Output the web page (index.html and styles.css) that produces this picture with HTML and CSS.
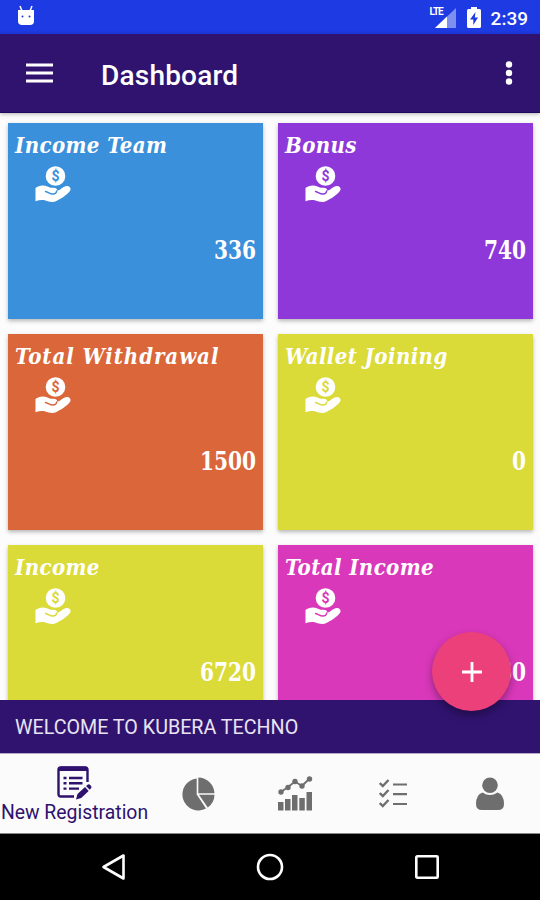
FILE: index.html
```
<!DOCTYPE html>
<html lang="en">
<head>
	<meta charset="UTF-8">
	<title>Dashboard</title>
	<link rel="stylesheet" href="styles.css">
</head>
<body>
	<!-- shared card icon -->
	<svg class="defs" width="0" height="0">
		<symbol id="hand" viewBox="0 0 36 37">
			<circle cx="20.5" cy="10" r="9.8" fill="#fff"/>
			<path fill="#fff" d="M.5 22c3-2.700 8-3.500 12-1.500 2 1 3 1.500 6 1.300 2.500 0 4 1.200 3.700 3 4-1 6-4.700 9.500-4.800 3.500-.2 4.800 3 3.200 5-3 4-9 7.700-13.500 10-4 2-8 .2-11-.5-3.500-.8-6.500-.3-9.900.8z"/>
			<path class="cut" fill="none" stroke-width="1.400" stroke-linecap="round" d="M10.500 25.500c3 .5 4.500 2.800 7.500 2.500 2 0 3.500-1 3.700-3"/>
		</symbol>
	</svg>
	<div class="phone">
		<div class="status">
			<svg class="droid" width="18" height="22" viewBox="0 0 18 22">
				<path d="M3 1l2 5M15 1l-2 5" stroke="#fff" stroke-width="1.500"/>
				<path d="M1 5h16v11q0 4-4 4H5q-4 0-4-4z" fill="#fff"/>
				<circle cx="5.500" cy="11.500" r="1" fill="#1d3ae3"/>
				<circle cx="12.500" cy="11.500" r="1" fill="#1d3ae3"/>
			</svg>
			<div class="signal">
				<span class="lte">LTE</span>
				<svg width="21" height="20" viewBox="0 0 21 20">
					<path d="M21 0v20H0z" fill="#7f8ff0"/>
					<path d="M12 8.500V20H0z" fill="#fff"/>
				</svg>
			</div>
			<svg class="battery" width="14" height="21" viewBox="0 0 14 21">
				<path d="M4 0h6v2h2.500q1.500 0 1.500 1.500v16q0 1.500-1.500 1.500h-11Q0 21 0 19.500v-16Q0 2 1.500 2H4z" fill="#fff"/>
				<path d="M8.500 5L3 12.500h3.300V18L11 10.500H7.800z" fill="#1d3ae3"/>
			</svg>
			<span class="time">2:39</span>
		</div>
		<div class="appbar">
			<svg width="27" height="20" viewBox="0 0 27 20">
				<path d="M0 2h27M0 10h27M0 18h27" stroke="#fff" stroke-width="3"/>
			</svg>
			<h1>Dashboard</h1>
			<svg class="more" width="8" height="24" viewBox="0 0 8 24" fill="#fff">
				<circle cx="4" cy="3.500" r="3.200"/>
				<circle cx="4" cy="12" r="3.200"/>
				<circle cx="4" cy="20.500" r="3.200"/>
			</svg>
		</div>
		<div class="content">
			<div class="card blue">
				<h2>Income Team</h2>
				<svg class="hand"><use href="#hand"/><text class="coin" x="20.5" y="15" text-anchor="middle">$</text></svg>
				<p>336</p>
			</div>
			<div class="card purple">
				<h2>Bonus</h2>
				<svg class="hand"><use href="#hand"/><text class="coin" x="20.5" y="15" text-anchor="middle">$</text></svg>
				<p>740</p>
			</div>
			<div class="card orange">
				<h2 class="wide">Total Withdrawal</h2>
				<svg class="hand"><use href="#hand"/><text class="coin" x="20.5" y="15" text-anchor="middle">$</text></svg>
				<p>1500</p>
			</div>
			<div class="card yellow">
				<h2>Wallet Joining</h2>
				<svg class="hand"><use href="#hand"/><text class="coin" x="20.5" y="15" text-anchor="middle">$</text></svg>
				<p>0</p>
			</div>
			<div class="card yellow">
				<h2>Income</h2>
				<svg class="hand"><use href="#hand"/><text class="coin" x="20.5" y="15" text-anchor="middle">$</text></svg>
				<p>6720</p>
			</div>
			<div class="card pink">
				<h2>Total Income</h2>
				<svg class="hand"><use href="#hand"/><text class="coin" x="20.5" y="15" text-anchor="middle">$</text></svg>
				<p>60</p>
			</div>
		</div>
		<div class="welcome">WELCOME TO KUBERA TECHNO</div>
		<div class="fab">
			<svg width="22" height="22" viewBox="0 0 22 22">
				<path d="M11 1v20M1 11h20" stroke="#fff" stroke-width="2.800"/>
			</svg>
		</div>
		<div class="tabs">
			<div class="tab active">
				<svg width="35" height="34" viewBox="0 0 35 34">
					<path d="M17 30.500H4Q1.500 30.500 1.500 28V3.500Q1.500 1.500 4 1.500H28Q30.500 1.500 30.500 4V16" fill="none" stroke="#2e126e" stroke-width="2.400"/>
					<path d="M1 5V3Q1 .5 4 .5h24q3 0 3 2.500v2z" fill="#2e126e"/>
					<path d="M6.500 12h3M12 12h13.500M6.500 17.300h3M12 17.300h13.500M6.500 22.600h3M12 22.600h10" stroke="#2e126e" stroke-width="2.400"/>
					<path d="M19 33.500l1.500-5.500 7.500-7 3.700 4-7.500 7zM29 20l2-1.500q1.200-.7 2.200.5l.9 1q.9 1.200-.1 2.200l-1.300 1.600z" fill="#2e126e"/>
				</svg>
				<span>New Registration</span>
			</div>
			<div class="tab">
				<svg width="34" height="34" viewBox="0 0 34 34" fill="#6e6e6e">
					<path d="M15.700 1.500V17.500L25 31.500A16 16 0 1 1 15.700 1.500z"/>
					<path d="M17.300.5A16.500 16.500 0 0 1 33.500 16.300H17.300z"/>
					<path d="M18 17.700H33.500A16.500 16.500 0 0 1 26.800 30.500z"/>
				</svg>
			</div>
			<div class="tab">
				<svg width="35" height="35" viewBox="0 0 35 35" fill="#6e6e6e">
					<path d="M3 16l7-5 7-5.500 7 4.500 7.500-7.500" fill="none" stroke="#6e6e6e" stroke-width="1.800"/>
					<circle cx="3" cy="16" r="2.700"/>
					<circle cx="10" cy="11.500" r="2.700"/>
					<circle cx="17" cy="5.500" r="2.700"/>
					<circle cx="24" cy="10" r="2.700"/>
					<circle cx="31.500" cy="3" r="2.700"/>
					<path d="M0 26h5.500v8.500H0zM7 23h5.500v11.500H7zM14 19h5.500v15.500H14zM21.300 22h5.500v12.500h-5.500zM28.500 16h5.500v18.500h-5.500z"/>
				</svg>
			</div>
			<div class="tab">
				<svg width="28" height="29" viewBox="0 0 28 29">
					<path d="M.8 4l3 3L9.500 1M.8 14l3 3L9.500 11M.8 24l3 3L9.500 21" fill="none" stroke="#6e6e6e" stroke-width="2.400"/>
					<path d="M14 5.500h14M14 15.200h14M14 25h14" stroke="#6e6e6e" stroke-width="2.200"/>
				</svg>
			</div>
			<div class="tab">
				<svg width="28" height="34" viewBox="0 0 28 34" fill="#6e6e6e">
					<circle cx="14" cy="8.300" r="7.800"/>
					<path d="M6.500 15.500q7.500 5 15 0 6.500 2 6.500 11.500 0 6-6 6H6q-6 0-6-6 0-9.500 6.500-11.500z"/>
				</svg>
			</div>
		</div>
		<div class="sysnav">
			<svg width="24" height="28" viewBox="0 0 24 28"><path d="M22.500 2.500v23L2.500 14z"/></svg>
			<svg width="28" height="28" viewBox="0 0 28 28"><circle cx="14" cy="14" r="12"/></svg>
			<svg width="24" height="24" viewBox="0 0 24 24"><rect x="1.300" y="1.300" width="21.400" height="21.400" rx="1"/></svg>
		</div>
	</div>
</body>
</html>
```
FILE: styles.css
```
*{
	margin: 0;
	padding: 0;
	box-sizing: border-box;
}
body{
	font-family: Roboto, "Liberation Sans", sans-serif;
	background: #000;
}
svg{
	display: block;
	flex: none;
}
.defs{
	position: absolute;
}
.phone{
	position: relative;
	width: 540px;
	height: 900px;
	display: flex;
	flex-direction: column;
	overflow: hidden;
	background: #fcfcfc;
}

.status{
	height: 34px;
	flex: none;
	display: flex;
	align-items: center;
	padding: 0 12px 0 17px;
	background: #1d3ae3;
	color: #fff;
}
.droid{
	margin-top: -2px;
}
.signal{
	position: relative;
	margin-left: auto;
	padding-top: 2px;
}
.lte{
	position: absolute;
	left: -5px;
	top: 1px;
	font-size: 10px;
	line-height: 10px;
	font-weight: bold;
	letter-spacing: -1px;
}
.battery{
	margin: 0 10px 0 11px;
}
.time{
	font-size: 19px;
	font-weight: 500;
	padding-top: 2px;
}

.appbar{
	position: relative;
	z-index: 1;
	height: 79px;
	flex: none;
	display: flex;
	align-items: center;
	padding: 0 27px 0 26px;
	background: #30136f;
	border-bottom: 1px solid #1f0660;
	box-shadow: 0 1px 4px rgba(0,0,0,.3);
}
.appbar h1{
	margin-left: 48px;
	padding-top: 4px;
	font-size: 28px;
	font-weight: 500;
	letter-spacing: .2px;
	color: #fff;
}
.more{
	margin-left: auto;
}

.content{
	flex: 1;
	min-height: 0;
	overflow: hidden;
	display: grid;
	grid-template-columns: 255px 255px;
	grid-auto-rows: 196px;
	gap: 15px;
	padding: 10px 8px;
}
.card{
	color: #fff;
	background: var(--card);
	padding: 8px 7px;
	box-shadow: 0 2px 4px rgba(0,0,0,.28);
}
.card h2{
	font: italic bold 22px/29px "DejaVu Serif Condensed", "DejaVu Serif", serif;
	font-stretch: condensed;
	letter-spacing: .4px;
	white-space: nowrap;
}
.card .wide{
	letter-spacing: .95px;
}
.hand{
	width: 36px;
	height: 37px;
	margin: 6px 0 0 20px;
}
.coin{
	font: bold 14px Roboto, sans-serif;
	fill: var(--card);
}
.cut{
	stroke: var(--card);
}
.card p{
	margin-top: 31px;
	text-align: right;
	font: bold 26px/32px "DejaVu Serif Condensed", "DejaVu Serif", serif;
	font-stretch: condensed;
	transform: scaleX(.86);
	transform-origin: right;
}
.blue{ --card: #3a90db; }
.purple{ --card: #8e38d9; }
.orange{ --card: #da6639; }
.yellow{ --card: #dada38; }
.pink{ --card: #da38ba; }

.welcome{
	height: 53px;
	flex: none;
	padding: 3px 15px 0;
	line-height: 50px;
	font-size: 19.7px;
	color: #e8e4f2;
	background: #30136f;
}
.fab{
	position: absolute;
	left: 432px;
	top: 632px;
	width: 79px;
	height: 79px;
	border-radius: 50%;
	background: #ec407a;
	box-shadow: 0 4px 9px rgba(0,0,0,.35);
	display: flex;
	align-items: center;
	justify-content: center;
}

.tabs{
	height: 81px;
	flex: none;
	display: grid;
	grid-template-columns: 149px repeat(4, 97.5px);
	background: #fbfbfb;
	border-top: 1px solid #b6aacb;
	border-bottom: 1px solid #888;
}
.tab{
	display: flex;
	flex-direction: column;
	align-items: center;
	justify-content: center;
}
.active{
	justify-content: flex-start;
	padding-top: 12px;
	font-size: 19.4px;
	line-height: 25px;
	color: #2e126e;
	white-space: nowrap;
}

.sysnav{
	height: 66px;
	flex: none;
	display: flex;
	align-items: center;
	justify-content: space-between;
	padding: 0 101px 0 101px;
	background: #000;
}
.sysnav svg{
	fill: none;
	stroke: #fff;
	stroke-width: 2.6;
	stroke-linejoin: round;
}
```
